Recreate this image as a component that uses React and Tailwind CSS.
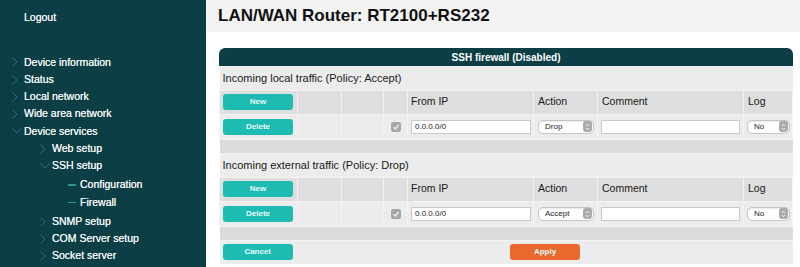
import React from "react";

const font = { fontFamily: '"Liberation Sans", Arial, sans-serif' };

function Chevron({ open }) {
  return open ? (
    <svg width="10" height="6" viewBox="0 0 10 6" className="flex-none">
      <path d="M0.5 0.5 L5 5 L9.5 0.5" fill="none" stroke="#2f6f70" strokeWidth="1" />
    </svg>
  ) : (
    <svg width="6" height="10" viewBox="0 0 6 10" className="flex-none">
      <path d="M0.5 0.5 L5 5 L0.5 9.5" fill="none" stroke="#2f6f70" strokeWidth="1" />
    </svg>
  );
}

function NavItem({ label, level = 1, open = false, leaf = false }) {
  const pad = level === 1 ? "pl-[12px]" : level === 2 ? "pl-[40px]" : "pl-[68px]";
  return (
    <div className={`flex h-[17.25px] items-center ${pad}`}>
      <div className="flex w-[12px] flex-none items-center">
        {leaf ? (
          <span className="block h-[1.5px] w-[8px] bg-[#2f9a90]" />
        ) : (
          <Chevron open={open} />
        )}
      </div>
      <span className="text-[10.5px] text-[#f4f4f4] [text-shadow:0_0_0.3px_#fff]">{label}</span>
    </div>
  );
}

function Sidebar() {
  return (
    <aside className="flex w-[206px] flex-none flex-col bg-[#0b3f45]">
      <div className="pl-[24px] pt-[10px] text-[10.5px] text-[#f4f4f4] [text-shadow:0_0_0.3px_#fff]">Logout</div>
      <div className="mt-[28px] flex flex-col">
        <NavItem label="Device information" />
        <NavItem label="Status" />
        <NavItem label="Local network" />
        <NavItem label="Wide area network" />
        <NavItem label="Device services" open />
        <NavItem label="Web setup" level={2} />
        <NavItem label="SSH setup" level={2} open />
        <div className="h-[2px]" />
        <NavItem label="Configuration" level={3} leaf />
        <NavItem label="Firewall" level={3} leaf />
        <div className="h-[2px]" />
        <NavItem label="SNMP setup" level={2} />
        <NavItem label="COM Server setup" level={2} />
        <NavItem label="Socket server" level={2} />
      </div>
    </aside>
  );
}

function Btn({ children, color = "teal" }) {
  const bg = color === "teal" ? "bg-[#1cbcb2]" : "bg-[#e8692b]";
  return (
    <div
      className={`flex h-[16px] w-[70px] items-center justify-center rounded-[3px] ${bg} text-[8px] font-bold text-[#e9fbf9]`}
    >
      {children}
    </div>
  );
}

function Select({ value, width }) {
  return (
    <div
      className={`flex h-[14px] ${width} items-center justify-between rounded-[5px] border border-[#c4c4c4] bg-white pl-[6px] pr-[1px] shadow-[inset_0_1px_1px_rgba(0,0,0,0.08)]`}
    >
      <span className="text-[8px] text-[#222]">{value}</span>
      <span className="flex h-[11px] w-[9px] flex-col items-center justify-center rounded-[3px] bg-[#a9a9a9]">
        <svg width="5" height="8" viewBox="0 0 5 8">
          <path d="M0.8 3 L2.5 1.2 L4.2 3 M0.8 5 L2.5 6.8 L4.2 5" fill="none" stroke="#fff" strokeWidth="0.9" />
        </svg>
      </span>
    </div>
  );
}

function Input({ value = "", width }) {
  return (
    <div
      className={`flex h-[14px] ${width} items-center border border-[#c9c9c9] bg-white px-[3px] text-[8px] text-[#222]`}
    >
      {value}
    </div>
  );
}

function Check() {
  return (
    <div className="mx-auto flex h-[10px] w-[10px] items-center justify-center rounded-[2px] bg-[#a7a7a7]">
      <svg width="8" height="8" viewBox="0 0 8 8">
        <path d="M1.5 4.2 L3.3 6 L6.6 2" fill="none" stroke="#f2f2f2" strokeWidth="1.3" />
      </svg>
    </div>
  );
}

const hd = "border border-[#f3f3f3] bg-[#dedede]";
const dt = "border border-[#f3f3f3] bg-[#ececec]";

function Section({ title, action }) {
  return (
    <>
      <tr className="h-[24px]">
        <td colSpan={8} className="bg-[#ececec] pl-[3px] text-[11px] text-[#1a1a1a]">
          {title}
        </td>
      </tr>
      <tr className="h-[24px]">
        <td className={`${hd} pl-[3px]`}>
          <Btn>New</Btn>
        </td>
        <td className={hd} />
        <td className={hd} />
        <td className={hd} />
        <td className={`${hd} pl-[3px] text-[10.5px] text-[#1a1a1a]`}>From IP</td>
        <td className={`${hd} pl-[4px] text-[10.5px] text-[#1a1a1a]`}>Action</td>
        <td className={`${hd} pl-[4px] text-[10.5px] text-[#1a1a1a]`}>Comment</td>
        <td className={`${hd} pl-[4px] text-[10.5px] text-[#1a1a1a]`}>Log</td>
      </tr>
      <tr className="h-[25px]">
        <td className={`${dt} pl-[3px]`}>
          <Btn>Delete</Btn>
        </td>
        <td className={dt} />
        <td className={dt} />
        <td className={dt}>
          <Check />
        </td>
        <td className={`${dt} pl-[3px]`}>
          <Input value="0.0.0.0/0" width="w-[120px]" />
        </td>
        <td className={`${dt} pl-[4px]`}>
          <Select value={action} width="w-[56px]" />
        </td>
        <td className={`${dt} pl-[3px]`}>
          <Input width="w-[139px]" />
        </td>
        <td className={`${dt} pl-[3px]`}>
          <Select value="No" width="w-[43px]" />
        </td>
      </tr>
      <tr className="h-[14px]">
        <td colSpan={8} className="border-y border-[#f3f3f3] bg-[#dbdbdb]" />
      </tr>
    </>
  );
}

export default function App() {
  return (
    <div className="flex h-[267px] w-[800px] overflow-hidden bg-white" style={font}>
      <Sidebar />
      <main className="flex flex-1 flex-col">
        <header className="flex h-[32px] items-center bg-[#f3f3f3] pl-[12px]">
          <h1 className="text-[17px] font-bold text-[#111]">LAN/WAN Router: RT2100+RS232</h1>
        </header>
        <section className="ml-[13px] mr-[8px] mt-[16px]">
          <div className="flex h-[18px] items-center justify-center rounded-t-[6px] bg-[#0b3f45] text-[10px] font-bold text-white">
            SSH firewall (Disabled)
          </div>
          <table className="w-full table-fixed border-collapse">
            <colgroup>
              <col className="w-[78px]" />
              <col className="w-[44px]" />
              <col className="w-[42px]" />
              <col className="w-[24px]" />
              <col className="w-[126px]" />
              <col className="w-[64px]" />
              <col className="w-[146px]" />
              <col className="w-[49px]" />
            </colgroup>
            <tbody>
              <Section title="Incoming local traffic (Policy: Accept)" action="Drop" />
              <Section title="Incoming external traffic (Policy: Drop)" action="Accept" />
              <tr className="h-[24px]">
                <td className="bg-[#ececec] pl-[3px]">
                  <Btn>Cancel</Btn>
                </td>
                <td colSpan={7} className="bg-[#ececec]">
                  <div className="flex justify-center">
                    <Btn color="orange">Apply</Btn>
                  </div>
                </td>
              </tr>
            </tbody>
          </table>
        </section>
      </main>
    </div>
  );
}
